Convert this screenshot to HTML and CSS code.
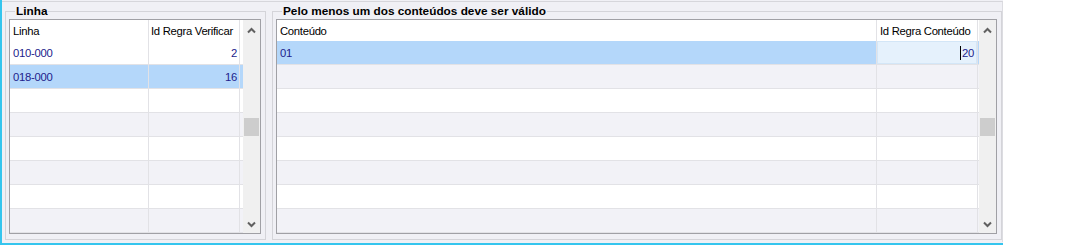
FILE: index.html
```html
<!DOCTYPE html>
<html>
<head>
<meta charset="utf-8">
<link rel="stylesheet" href="styles.css">
</head>
<body>
<div class="screen">
  <div class="panel">
    <fieldset class="group g1">
      <legend>Linha</legend>
      <div class="grid">
        <div class="table">
          <div class="row head"><div class="cell">Linha</div><div class="cell">Id Regra Verificar</div><div class="fill"></div></div>
          <div class="row"><div class="cell">010-000</div><div class="cell num">2</div><div class="fill"></div></div>
          <div class="row sel"><div class="cell">018-000</div><div class="cell num">16</div><div class="fill"></div></div>
          <div class="row"><div class="cell"></div><div class="cell"></div><div class="fill"></div></div>
          <div class="row alt"><div class="cell"></div><div class="cell"></div><div class="fill"></div></div>
          <div class="row"><div class="cell"></div><div class="cell"></div><div class="fill"></div></div>
          <div class="row alt"><div class="cell"></div><div class="cell"></div><div class="fill"></div></div>
          <div class="row"><div class="cell"></div><div class="cell"></div><div class="fill"></div></div>
          <div class="row alt"><div class="cell"></div><div class="cell"></div><div class="fill"></div></div>
        </div>
        <div class="scroll">
          <svg class="arrow" width="17" height="20" viewBox="0 0 17 20"><polyline points="5,12.5 8.5,9 12,12.5" /></svg>
          <div class="thumb"></div>
          <div class="spacer"></div>
          <svg class="arrow" width="17" height="20" viewBox="0 0 17 20"><polyline points="5,9.5 8.5,13 12,9.5" /></svg>
        </div>
      </div>
    </fieldset>
    <fieldset class="group g2">
      <legend>Pelo menos um dos conteúdos deve ser válido</legend>
      <div class="grid">
        <div class="table">
          <div class="row head"><div class="cell">Conteúdo</div><div class="cell">Id Regra Conteúdo</div><div class="fill"></div></div>
          <div class="row sel"><div class="cell">01</div><div class="cell num edit"><span class="caret"></span>20</div><div class="fill"></div></div>
          <div class="row alt"><div class="cell"></div><div class="cell"></div><div class="fill"></div></div>
          <div class="row"><div class="cell"></div><div class="cell"></div><div class="fill"></div></div>
          <div class="row alt"><div class="cell"></div><div class="cell"></div><div class="fill"></div></div>
          <div class="row"><div class="cell"></div><div class="cell"></div><div class="fill"></div></div>
          <div class="row alt"><div class="cell"></div><div class="cell"></div><div class="fill"></div></div>
          <div class="row"><div class="cell"></div><div class="cell"></div><div class="fill"></div></div>
          <div class="row alt"><div class="cell"></div><div class="cell"></div><div class="fill"></div></div>
        </div>
        <div class="scroll">
          <svg class="arrow" width="17" height="20" viewBox="0 0 17 20"><polyline points="5,12.5 8.5,9 12,12.5" /></svg>
          <div class="thumb"></div>
          <div class="spacer"></div>
          <svg class="arrow" width="17" height="20" viewBox="0 0 17 20"><polyline points="5,9.5 8.5,13 12,9.5" /></svg>
        </div>
      </div>
    </fieldset>
  </div>
</div>
</body>
</html>
```
FILE: styles.css
```css
html, body {
  margin: 0;
  padding: 0;
  background: #ffffff;
}

body {
  font-family: "Liberation Sans", Arial, sans-serif;
  font-size: 11.3px;
  letter-spacing: -0.3px;
  color: #000;
}

.screen {
  width: 1003px;
  height: 245px;
  box-sizing: border-box;
  border-left: 2px solid #35c5ee;
  border-bottom: 2px solid #35c5ee;
  background: #f0f0f5;
  padding-top: 1px;
}

.panel {
  border-top: 1px solid #d6d6db;
  border-right: 1px solid #dcdce1;
  height: 241px;
  box-sizing: border-box;
  display: flex;
  gap: 6px;
  padding: 3px 0 0 3px;
}

.group {
  margin: 0;
  box-sizing: border-box;
  border: 1px solid #d4d4d9;
  padding: 1px 4px 5px 3px;
  height: 235px;
  min-width: 0;
}

.g1 { width: 261px; }
.g2 { width: 730px; }

.group legend {
  font-weight: bold;
  font-size: 11.8px;
  letter-spacing: 0;
  line-height: 13px;
  padding: 0 1px;
  margin-left: 6px;
  color: #000;
}

.grid {
  display: flex;
  border: 1px solid #a0a0a5;
  height: 215px;
  box-sizing: border-box;
  background: #fff;
}

.table {
  flex: 1;
  display: flex;
  flex-direction: column;
}

.row {
  display: grid;
  height: 24px;
  box-sizing: border-box;
  border-bottom: 1px solid #e2e2e6;
  background: #fff;
  color: #22228c;
}

.g1 .row { grid-template-columns: 139px 91px 1fr; }
.g2 .row { grid-template-columns: 600px 101px 1fr; }

.row.head {
  height: 21px;
  border-bottom: none;
  color: #000;
}

.row.alt { background: #f2f2f7; }
.row.sel { background: #b4d7fa; }

.cell {
  border-right: 1px solid #e2e2e6;
  display: flex;
  align-items: center;
  padding: 0 2px 0 3px;
  white-space: nowrap;
  overflow: hidden;
}

.g1 .row .cell:nth-child(2) { padding-left: 2px; }

.cell.num { justify-content: flex-end; }

.cell.edit {
  background: #e5f1fc;
  box-shadow: inset 0 0 0 1px #d3e6f7;
  padding-right: 3px;
}

.caret {
  display: inline-block;
  width: 1px;
  height: 14px;
  background: #000;
  margin-right: 1px;
}

.scroll {
  width: 17px;
  background: #f0f0f0;
  display: flex;
  flex-direction: column;
}

.arrow polyline {
  fill: none;
  stroke: #606060;
  stroke-width: 2;
}

.thumb {
  margin: 78px 0 0 1px;
  width: 15px;
  height: 18px;
  background: #cdcdcd;
}

.spacer { flex: 1; }
```
